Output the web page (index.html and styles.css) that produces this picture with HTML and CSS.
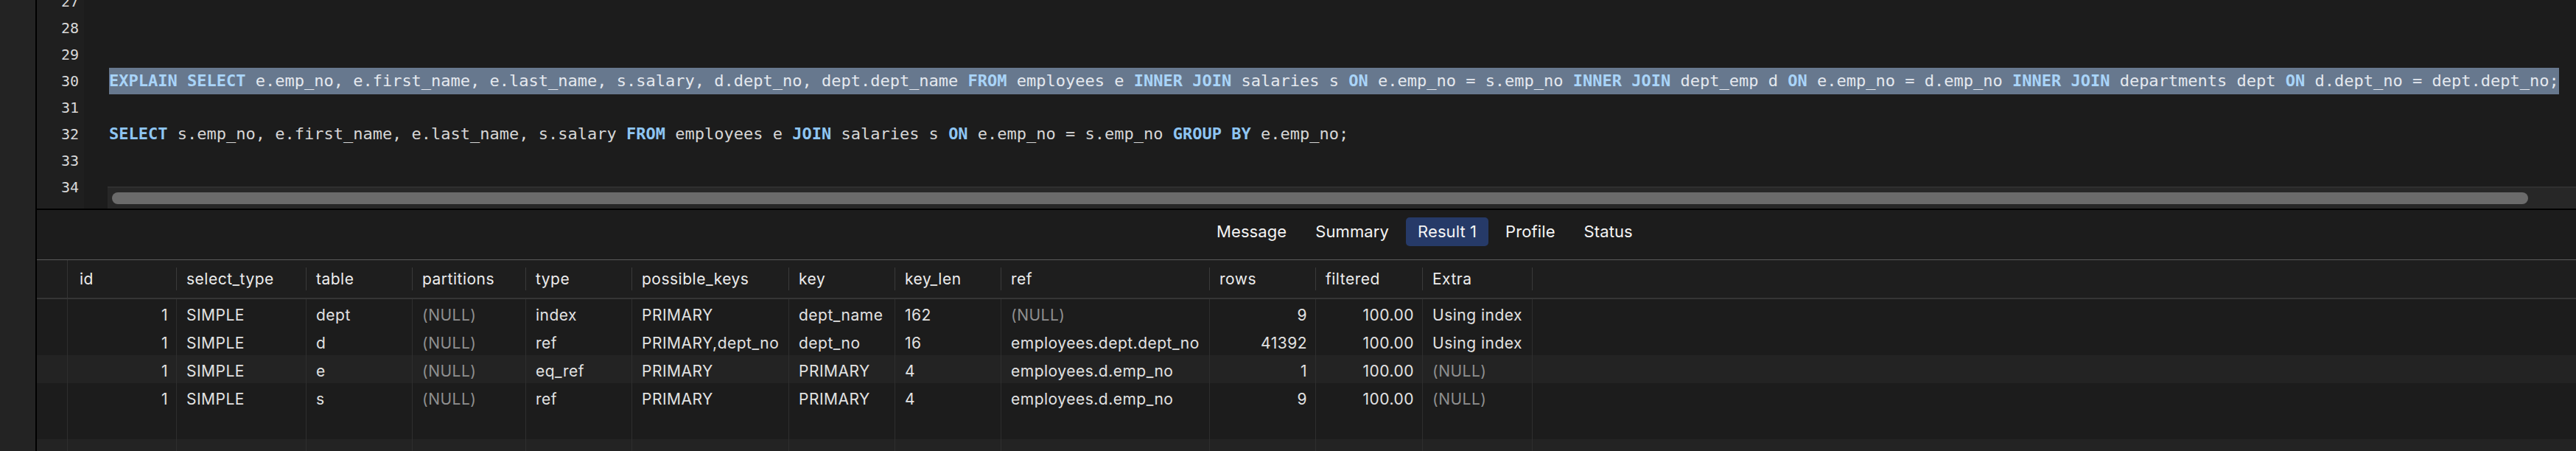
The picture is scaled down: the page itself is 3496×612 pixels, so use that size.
FILE: index.html
```html
<!DOCTYPE html>
<html>
<head>
<meta charset="utf-8">
<link rel="stylesheet" href="styles.css">
</head>
<body>
<div class="app">
  <div class="sidebar"></div>
  <div class="main">
    <div class="editor">
      <div class="gutter">
        <div class="nums">
          <div class="ln">27</div>
          <div class="ln">28</div>
          <div class="ln">29</div>
          <div class="ln">30</div>
          <div class="ln">31</div>
          <div class="ln">32</div>
          <div class="ln">33</div>
          <div class="ln">34</div>
          <div class="ln">35</div>
        </div>
      </div>
      <div class="pane">
        <div class="code">
          <div class="lines">
            <div class="cl"></div>
            <div class="cl"></div>
            <div class="cl"></div>
            <div class="cl"><span class="sel"><b class="kw">EXPLAIN</b> <b class="kw">SELECT</b> e.emp_no, e.first_name, e.last_name, s.salary, d.dept_no, dept.dept_name <b class="kw">FROM</b> employees e <b class="kw">INNER</b> <b class="kw">JOIN</b> salaries s <b class="kw">ON</b> e.emp_no = s.emp_no <b class="kw">INNER</b> <b class="kw">JOIN</b> dept_emp d <b class="kw">ON</b> e.emp_no = d.emp_no <b class="kw">INNER</b> <b class="kw">JOIN</b> departments dept <b class="kw">ON</b> d.dept_no = dept.dept_no;</span></div>
            <div class="cl"></div>
            <div class="cl"><b class="kw">SELECT</b> s.emp_no, e.first_name, e.last_name, s.salary <b class="kw">FROM</b> employees e <b class="kw">JOIN</b> salaries s <b class="kw">ON</b> e.emp_no = s.emp_no <b class="kw">GROUP</b> <b class="kw">BY</b> e.emp_no;</div>
            <div class="cl"></div>
            <div class="cl"></div>
          </div>
        </div>
        <div class="hscroll"><div class="thumb"></div></div>
      </div>
    </div>
    <div class="divider"></div>
    <div class="results">
      <div class="tabbar">
        <div class="tab">Message</div>
        <div class="tab">Summary</div>
        <div class="tab active">Result 1</div>
        <div class="tab">Profile</div>
        <div class="tab">Status</div>
      </div>
      <div class="grid">
        <div class="row head">
          <div class="h rn"></div>
          <div class="h first">id</div>
          <div class="h">select_type</div>
          <div class="h">table</div>
          <div class="h">partitions</div>
          <div class="h">type</div>
          <div class="h">possible_keys</div>
          <div class="h">key</div>
          <div class="h">key_len</div>
          <div class="h">ref</div>
          <div class="h">rows</div>
          <div class="h">filtered</div>
          <div class="h">Extra</div>
          <div class="h last"></div>
        </div>
        <div class="row">
          <div class="c"></div><div class="c num">1</div><div class="c">SIMPLE</div><div class="c">dept</div><div class="c null">(NULL)</div><div class="c">index</div><div class="c">PRIMARY</div><div class="c">dept_name</div><div class="c">162</div><div class="c null">(NULL)</div><div class="c num">9</div><div class="c num">100.00</div><div class="c">Using index</div><div class="c last"></div>
        </div>
        <div class="row">
          <div class="c"></div><div class="c num">1</div><div class="c">SIMPLE</div><div class="c">d</div><div class="c null">(NULL)</div><div class="c">ref</div><div class="c">PRIMARY,dept_no</div><div class="c">dept_no</div><div class="c">16</div><div class="c">employees.dept.dept_no</div><div class="c num">41392</div><div class="c num">100.00</div><div class="c">Using index</div><div class="c last"></div>
        </div>
        <div class="row alt">
          <div class="c"></div><div class="c num">1</div><div class="c">SIMPLE</div><div class="c">e</div><div class="c null">(NULL)</div><div class="c">eq_ref</div><div class="c">PRIMARY</div><div class="c">PRIMARY</div><div class="c">4</div><div class="c">employees.d.emp_no</div><div class="c num">1</div><div class="c num">100.00</div><div class="c null">(NULL)</div><div class="c last"></div>
        </div>
        <div class="row">
          <div class="c"></div><div class="c num">1</div><div class="c">SIMPLE</div><div class="c">s</div><div class="c null">(NULL)</div><div class="c">ref</div><div class="c">PRIMARY</div><div class="c">PRIMARY</div><div class="c">4</div><div class="c">employees.d.emp_no</div><div class="c num">9</div><div class="c num">100.00</div><div class="c null">(NULL)</div><div class="c last"></div>
        </div>
        <div class="row">
          <div class="c"></div><div class="c"></div><div class="c"></div><div class="c"></div><div class="c"></div><div class="c"></div><div class="c"></div><div class="c"></div><div class="c"></div><div class="c"></div><div class="c"></div><div class="c"></div><div class="c"></div><div class="c last"></div>
        </div>
        <div class="row alt">
          <div class="c"></div><div class="c"></div><div class="c"></div><div class="c"></div><div class="c"></div><div class="c"></div><div class="c"></div><div class="c"></div><div class="c"></div><div class="c"></div><div class="c"></div><div class="c"></div><div class="c"></div><div class="c last"></div>
        </div>
      </div>
    </div>
  </div>
</div>
</body>
</html>
```

FILE: styles.css
```css
* { box-sizing: border-box; }
html, body { margin: 0; padding: 0; }
body {
  width: 3496px;
  height: 612px;
  overflow: hidden;
  background: #1c1c1c;
}
.app {
  display: flex;
  height: 612px;
}
.sidebar {
  width: 50px;
  flex: none;
  background: #232323;
  border-right: 2px solid #000;
}
.main {
  flex: 1;
  display: flex;
  flex-direction: column;
  min-width: 0;
}
.editor {
  height: 283px;
  flex: none;
  display: flex;
  overflow: hidden;
}
.gutter {
  width: 64px;
  flex: none;
  background: #1f1f1f;
  overflow: hidden;
}
.nums {
  margin-top: -16px;
  padding-right: 7px;
  text-align: right;
  font-family: "DejaVu Sans Mono", monospace;
  font-size: 20px;
  color: #d8d8d8;
}
.ln {
  height: 36px;
  line-height: 36px;
}
.pane {
  flex: 1;
  min-width: 0;
  display: flex;
  flex-direction: column;
  background: #1c1c1c;
}
.code {
  flex: 1;
  min-height: 0;
  overflow: hidden;
  padding-left: 34px;
}
.lines {
  margin-top: -16px;
  font-family: "DejaVu Sans Mono", monospace;
  font-size: 22px;
  color: #d6d6d6;
}
.cl {
  height: 36px;
  line-height: 36px;
  white-space: pre;
}
.kw {
  color: #8ec5f2;
  font-weight: bold;
}
.sel {
  display: inline-block;
  height: 36px;
  background: #67788e;
  color: #e4e8ee;
}
.sel .kw { color: #a9d4f8; }
.hscroll {
  height: 30px;
  flex: none;
  margin-left: 32px;
  background: #272727;
  border-top: 2px solid #303030;
  padding: 6px 0 0 6px;
}
.thumb {
  width: 3279px;
  height: 16px;
  border-radius: 8px;
  background: #6b6b6b;
}
.divider {
  height: 2px;
  flex: none;
  background: #000;
}
.results {
  flex: 1;
  display: flex;
  flex-direction: column;
  background: #1c1c1c;
  font-family: "Inter", "Liberation Sans", sans-serif;
}
.tabbar {
  height: 68px;
  flex: none;
  display: flex;
  align-items: flex-start;
  gap: 7px;
  padding-left: 1585px;
  padding-top: 10px;
  border-bottom: 1px solid #5a5a5a;
  background: #1c1c1c;
}
.tab {
  height: 39px;
  line-height: 39px;
  padding: 0 16px;
  font-size: 22px;
  letter-spacing: 0.1px;
  color: #f4f4f4;
  border-radius: 5px;
}
.tab.active {
  background: #263a68;
}
.grid {
  flex: 1;
  overflow: hidden;
}
.row {
  display: grid;
  grid-template-columns: 42px 148px 176px 144px 154px 144px 213px 144px 144px 283px 144px 145px 149px 1fr;
  height: 38px;
  font-size: 21px;
  letter-spacing: 0.5px;
  color: #e2e2e2;
}
.row.head {
  height: 53px;
  align-items: center;
  background: #1e1e1e;
  border-bottom: 2px solid #353535;
  color: #ececec;
}
.h {
  height: 31px;
  line-height: 31px;
  padding-left: 13px;
  border-right: 1px solid #3a3a3a;
  white-space: nowrap;
}
.h.first { padding-left: 16px; }
.h.rn {
  align-self: stretch;
  height: auto;
  border-right-color: #333;
}
.h.last, .c.last { border-right: none; }
.row.alt { background: #232323; }
.c {
  line-height: 38px;
  padding: 3px 11px 0 13px;
  border-right: 1px solid #2e2e2e;
  white-space: nowrap;
  overflow: hidden;
}
.c.num { text-align: right; }
.c.null { color: #8f8f8f; }
```
